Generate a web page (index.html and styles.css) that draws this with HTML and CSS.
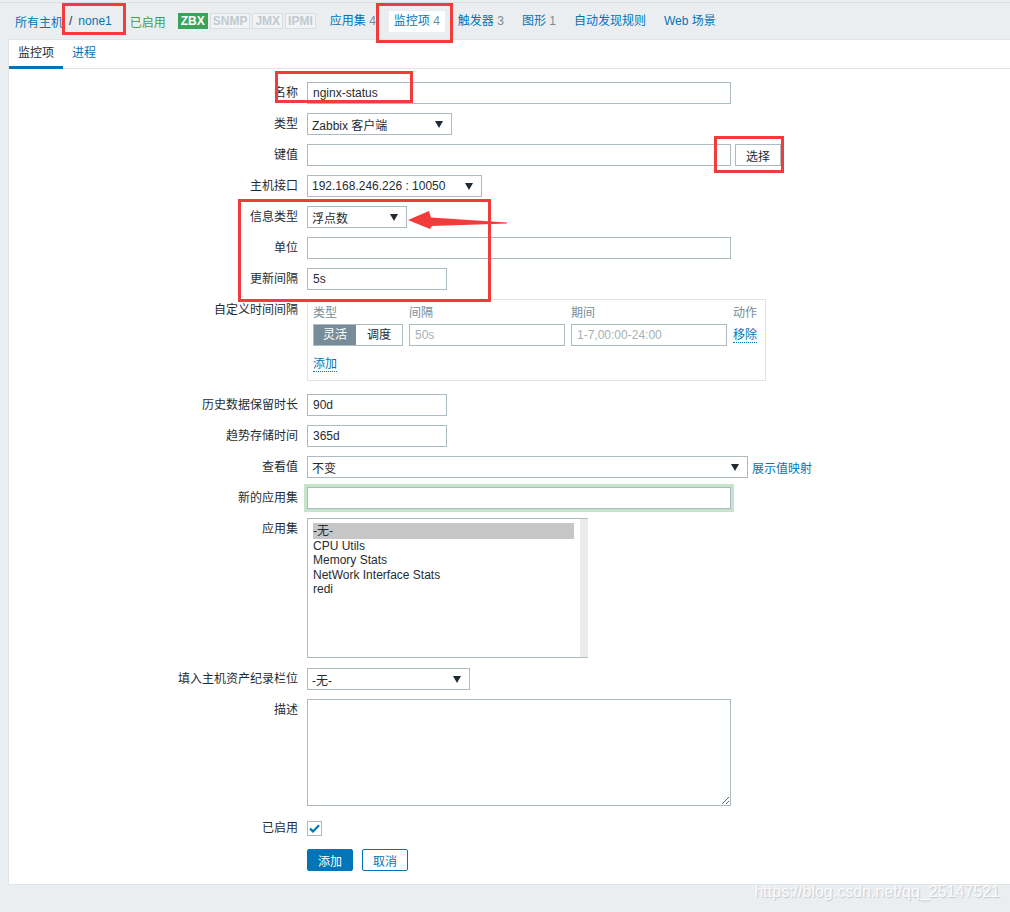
FILE: index.html
```html
<!DOCTYPE html>
<html lang="zh-CN">
<head>
<meta charset="utf-8">
<title>监控项</title>
<link rel="stylesheet" href="styles.css">
</head>
<body>
<header class="hostnav">
  <a class="link">所有主机</a>
  <span class="sep">/</span>
  <a class="link">none1</a>
  <span class="status-on">已启用</span>
  <span class="badges">
    <span class="badge badge-on">ZBX</span>
    <span class="badge">SNMP</span>
    <span class="badge">JMX</span>
    <span class="badge">IPMI</span>
  </span>
  <nav class="hostlinks">
    <a class="hl">应用集 <span class="cnt">4</span></a>
    <a class="hl hl-active">监控项 <span class="cnt">4</span></a>
    <a class="hl">触发器 <span class="cnt">3</span></a>
    <a class="hl">图形 <span class="cnt">1</span></a>
    <a class="hl">自动发现规则</a>
    <a class="hl">Web 场景</a>
  </nav>
</header>

<main class="panel">
  <div class="tabs">
    <span class="tab tab-active">监控项</span>
    <span class="tab">进程</span>
  </div>

  <form class="form">
    <div class="row">
      <label class="lbl">名称</label>
      <div class="ctl"><input class="inp w-wide" type="text" value="nginx-status"></div>
    </div>
    <div class="row">
      <label class="lbl">类型</label>
      <div class="ctl"><div class="sel w-145"><span>Zabbix 客户端</span><i class="caret"></i></div></div>
    </div>
    <div class="row">
      <label class="lbl">键值</label>
      <div class="ctl"><input class="inp w-wide" type="text" value=""><button type="button" class="btn-grey">选择</button></div>
    </div>
    <div class="row">
      <label class="lbl">主机接口</label>
      <div class="ctl"><div class="sel w-175"><span>192.168.246.226 : 10050</span><i class="caret"></i></div></div>
    </div>
    <div class="row">
      <label class="lbl">信息类型</label>
      <div class="ctl"><div class="sel w-100"><span>浮点数</span><i class="caret"></i></div></div>
    </div>
    <div class="row">
      <label class="lbl">单位</label>
      <div class="ctl"><input class="inp w-wide" type="text" value=""></div>
    </div>
    <div class="row">
      <label class="lbl">更新间隔</label>
      <div class="ctl"><input class="inp w-140" type="text" value="5s"></div>
    </div>
    <div class="row row-table">
      <label class="lbl">自定义时间间隔</label>
      <div class="ctl">
        <div class="intervals">
          <div class="iv-grid">
            <span class="iv-h">类型</span>
            <span class="iv-h">间隔</span>
            <span class="iv-h">期间</span>
            <span class="iv-h">动作</span>
            <div class="seg"><span class="seg-on">灵活</span><span class="seg-off">调度</span></div>
            <input class="inp w-156" type="text" placeholder="50s">
            <input class="inp w-156" type="text" placeholder="1-7,00:00-24:00">
            <span class="iv-act"><a class="dlink">移除</a></span>
          </div>
          <a class="dlink add">添加</a>
        </div>
      </div>
    </div>
    <div class="row">
      <label class="lbl">历史数据保留时长</label>
      <div class="ctl"><input class="inp w-140" type="text" value="90d"></div>
    </div>
    <div class="row">
      <label class="lbl">趋势存储时间</label>
      <div class="ctl"><input class="inp w-140" type="text" value="365d"></div>
    </div>
    <div class="row">
      <label class="lbl">查看值</label>
      <div class="ctl"><div class="sel w-441"><span>不变</span><i class="caret"></i></div><a class="link map">展示值映射</a></div>
    </div>
    <div class="row">
      <label class="lbl">新的应用集</label>
      <div class="ctl"><input class="inp w-wide focus" type="text" value=""></div>
    </div>
    <div class="row row-list">
      <label class="lbl">应用集</label>
      <div class="ctl">
        <div class="listbox">
          <div class="opts">
            <div class="opt opt-sel">-无-</div>
            <div class="opt">CPU Utils</div>
            <div class="opt">Memory Stats</div>
            <div class="opt">NetWork Interface Stats</div>
            <div class="opt">redi</div>
          </div>
          <div class="scroll"></div>
        </div>
      </div>
    </div>
    <div class="row">
      <label class="lbl">填入主机资产纪录栏位</label>
      <div class="ctl"><div class="sel w-163"><span>-无-</span><i class="caret"></i></div></div>
    </div>
    <div class="row row-area">
      <label class="lbl">描述</label>
      <div class="ctl"><textarea class="area"></textarea></div>
    </div>
    <div class="row row-check">
      <label class="lbl">已启用</label>
      <div class="ctl ctl-check">
        <span class="check"><svg width="11" height="9" viewBox="0 0 11 9"><path d="M1 4.6 L4 7.4 L10 1.2" fill="none" stroke="#0275b8" stroke-width="2.2"/></svg></span>
      </div>
    </div>
    <div class="row row-btns">
      <span class="lbl"></span>
      <div class="ctl"><button type="button" class="btn-main">添加</button><button type="button" class="btn-alt">取消</button></div>
    </div>
  </form>
</main>

<div class="annot a1"></div>
<div class="annot a2"></div>
<div class="annot a3"></div>
<div class="annot a4"></div>
<div class="annot a5"></div>
<svg class="arrow" width="120" height="40" viewBox="0 0 120 40">
  <polygon points="8,20 29,11 31,17.5 107,22.6 107,23.4 32,26 30,29" fill="#f23b3b"/>
</svg>
<div class="watermark">https://blog.csdn.net/qq_25147521</div>
</body>
</html>
```

FILE: styles.css
```css
* { box-sizing: border-box; }

html, body { margin: 0; }

body {
  position: relative;
  min-height: 912px;
  padding-top: 2px;
  background: #ebeef0;
  color: #1f2c33;
  font: 12px "Liberation Sans", Arial, "Noto Sans CJK SC", sans-serif;
}

a { text-decoration: none; cursor: pointer; }
.link { color: #0275b8; }

/* ---------- host navigation ---------- */
.hostnav {
  display: flex;
  align-items: center;
  height: 37px;
  padding-left: 15px;
  border-top: 1px solid #d9dfe3;
}
.sep { margin: 0 6px; color: #1f2c33; }
.status-on { margin-left: 18px; color: #429e47; }

.badges { display: flex; gap: 2px; margin-left: 12px; }
.badge {
  height: 16px;
  padding: 0 2px;
  line-height: 14px;
  border: 1px solid #d8dfe3;
  background: #f1f3f5;
  color: #c0cacf;
  font-weight: bold;
}
.badge-on { background: #3aa35a; border-color: #3aa35a; color: #fff; }

.hostlinks { display: flex; align-items: center; gap: 8px; margin-left: 9px; }
.hl {
  height: 21px;
  padding: 0 5px;
  line-height: 21px;
  color: #0275b8;
}
.hl-active { background: #fff; }
.cnt { color: #768d99; }

/* ---------- panel ---------- */
.panel {
  margin-left: 8px;
  background: #fff;
  border: 1px solid #dfe4e7;
  border-right: none;
}

.tabs {
  display: flex;
  height: 29px;
  border-bottom: 1px solid #dfe4e7;
}
.tab {
  height: 29px;
  padding: 0 9px;
  line-height: 26px;
  border-bottom: 3px solid transparent;
  color: #0275b8;
}
.tab-active { color: #1f2c33; border-bottom-color: #0275b8; }

/* ---------- form ---------- */
.form { padding: 13px 0 13px; }

.row { display: flex; align-items: flex-start; margin-bottom: 9px; }
.row:last-child { margin-bottom: 0; }
.lbl {
  flex: 0 0 289px;
  text-align: right;
  line-height: 22px;
  color: #1f2c33;
}
.ctl { display: flex; align-items: center; margin-left: 9px; }

.inp {
  height: 22px;
  padding: 0 5px;
  border: 1px solid #acbbc2;
  background: #fff;
  color: #1f2c33;
  font: inherit;
  outline: none;
}
.inp::placeholder { color: #a4b1b8; }
.focus { box-shadow: 0 0 0 3px #c6e4ca; }

.w-wide { width: 424px; }
.w-140 { width: 140px; }
.w-156 { width: 156px; }
.w-100 { width: 100px; }
.w-145 { width: 145px; }
.w-163 { width: 163px; }
.w-175 { width: 175px; }
.w-441 { width: 441px; }

.sel {
  display: flex;
  align-items: center;
  justify-content: space-between;
  height: 22px;
  padding: 0 8px 0 4px;
  border: 1px solid #acbbc2;
  background: #fff;
  color: #1f2c33;
}
.caret {
  width: 0;
  height: 0;
  border-left: 4px solid transparent;
  border-right: 4px solid transparent;
  border-top: 7px solid #1f2c33;
}

.btn-grey {
  height: 22px;
  margin-left: 4px;
  padding: 0 10px;
  border: 1px solid #acbbc2;
  background: #fff;
  color: #1f2c33;
  font: inherit;
}

.map { margin-left: 4px; }

/* custom intervals */
.row-table { margin-bottom: 13px; }
.intervals {
  width: 459px;
  padding: 4px 8px 8px 5px;
  border: 1px solid #dfe4e7;
}
.iv-grid {
  display: grid;
  grid-template-columns: 90px 156px 156px 1fr;
  grid-template-rows: 18px 22px;
  column-gap: 6px;
  row-gap: 2px;
}
.iv-h { line-height: 18px; color: #768d99; }
.iv-act { display: flex; align-items: center; }
.seg { display: flex; height: 22px; border: 1px solid #acbbc2; }
.seg span { line-height: 20px; text-align: center; }
.seg-on { width: 42px; background: #768d99; color: #fff; }
.seg-off { width: 46px; background: #fff; color: #1f2c33; }
.dlink {
  display: inline-block;
  line-height: 14px;
  color: #0275b8;
  border-bottom: 1px dotted #0275b8;
}
.add { margin-top: 11px; }

/* list box */
.row-list { margin-bottom: 10px; }
.listbox {
  display: flex;
  width: 281px;
  height: 140px;
  border: 1px solid #acbbc2;
  border-right: none;
}
.opts { flex: 1; padding: 4px 6px 0 5px; }
.opt { line-height: 14.5px; color: #1f2c33; }
.opt-sel { padding-top: 1px; background: #c6c6c6; }
.scroll { width: 8px; background: #ebebeb; }

/* textarea */
.row-area { margin-bottom: 11px; }
.area {
  display: block;
  width: 424px;
  height: 107px;
  border: 1px solid #acbbc2;
  font: inherit;
  resize: both;
  outline: none;
}

/* checkbox */
.row-check { margin-bottom: 10px; }
.ctl-check { height: 22px; }
.check {
  display: flex;
  align-items: center;
  justify-content: center;
  width: 15px;
  height: 15px;
  border: 1px solid #acbbc2;
  background: #fff;
}

/* buttons */
.btn-main, .btn-alt {
  height: 22px;
  padding: 0 10px;
  border-radius: 2px;
  font: inherit;
}
.btn-main { border: 1px solid #0275b8; background: #0275b8; color: #fff; }
.btn-alt { margin-left: 9px; border: 1px solid #0275b8; background: #fff; color: #0275b8; }

/* ---------- annotations (overlay) ---------- */
.annot { position: absolute; border: 3px solid #f23b3b; }
.a1 { left: 62px; top: 3px; width: 64px; height: 32px; }
.a2 { left: 376px; top: 3px; width: 77px; height: 40px; }
.a3 { left: 275px; top: 71px; width: 138px; height: 32px; }
.a4 { left: 714px; top: 136px; width: 70px; height: 37px; }
.a5 { left: 238px; top: 199px; width: 253px; height: 103px; }
.arrow { position: absolute; left: 400px; top: 200px; }

.watermark {
  position: absolute;
  right: 10px;
  top: 882px;
  font-size: 16px;
  line-height: 20px;
  color: rgba(255, 255, 255, 0.9);
  text-shadow: 1px 1px 1px rgba(120, 130, 140, 0.35);
}
```
